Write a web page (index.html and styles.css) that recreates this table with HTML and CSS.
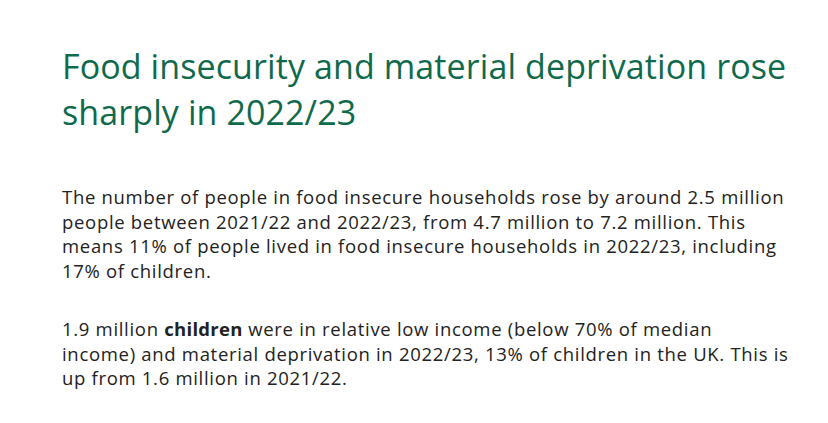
FILE: index.html
```html
<!DOCTYPE html>
<html lang="en">
<head>
<meta charset="utf-8">
<title>Food insecurity</title>
<link rel="stylesheet" href="styles.css">
</head>
<body>
<main class="article">
  <h2 class="title">Food insecurity and material deprivation rose sharply in 2022/23</h2>
  <p class="para">The number of people in food insecure households rose by around 2.5 million people between 2021/22 and 2022/23, from 4.7 million to 7.2 million. This means 11% of people lived in food insecure households in 2022/23, including 17% of children.</p>
  <p class="para">1.9 million <strong>children</strong> were in relative low income (below 70% of median income) and material deprivation in 2022/23, 13% of children in the UK. This is up from 1.6 million in 2021/22.</p>
</main>
</body>
</html>
```
FILE: styles.css
```css
html, body {
  margin: 0;
  padding: 0;
  background: #ffffff;
}
.article {
  padding: 43px 0 0 62px;
  width: 728px;
  font-family: "Open Sans", "Noto Sans", sans-serif;
}
.title {
  margin: 0 0 50px 0;
  font-weight: 400;
  font-size: 34px;
  letter-spacing: 0.1px;
  line-height: 46px;
  color: #0f6a4b;
  width: 740px;
}
.para {
  margin: 0 0 33px 0;
  font-size: 18.5px;
  letter-spacing: 0.69px;
  line-height: 24.7px;
  color: #222222;
}
.para strong {
  font-weight: 700;
  letter-spacing: 0.3px;
}
```
